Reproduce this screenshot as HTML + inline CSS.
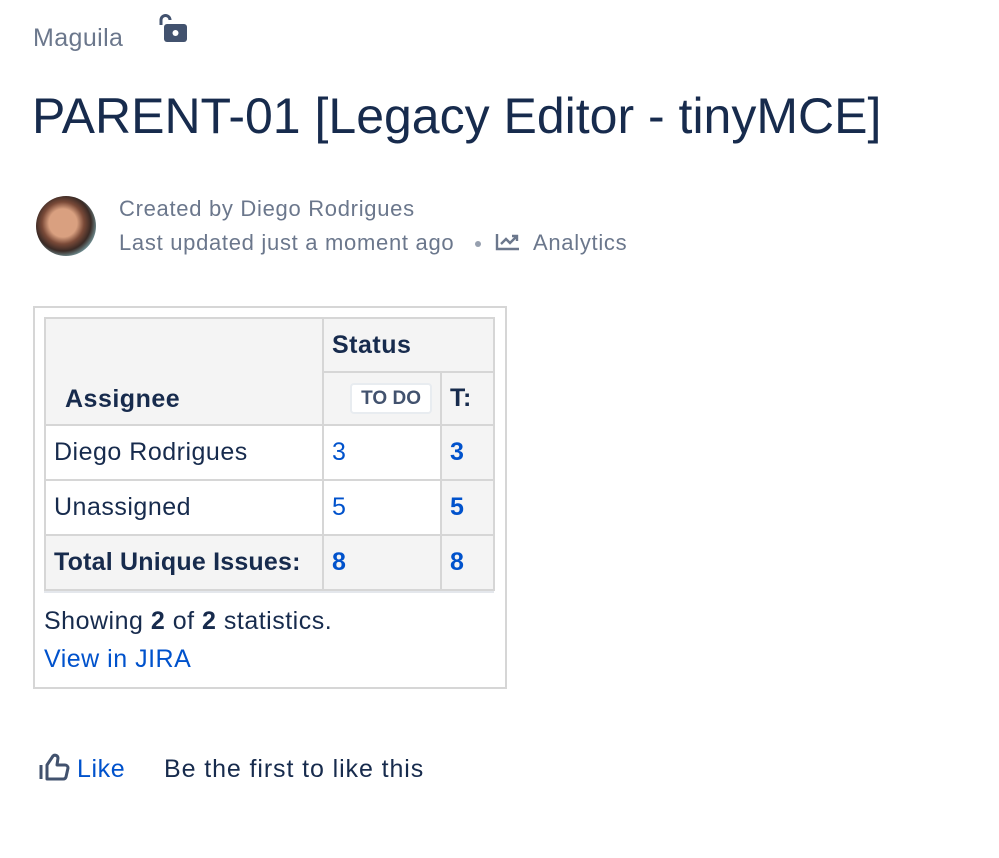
<!DOCTYPE html>
<html><head><style>
body{margin:0;width:999px;height:858px;background:#fff;font-family:"Liberation Sans",sans-serif;position:relative;overflow:hidden;color:#172B4D}
.a{position:absolute;white-space:nowrap}
table{position:absolute;left:44px;top:317px;border-collapse:collapse;font-size:25px;table-layout:fixed;width:449px;letter-spacing:0.5px}
td,th{border:2px solid #d6d6d6;padding:0 8px;text-align:left;line-height:1;overflow:visible;white-space:nowrap}
th{background:#f4f4f4;font-weight:bold}
a{color:#0052CC;text-decoration:none}
</style></head><body>
<div class="a" style="left:33px;top:24px;font-size:25px;color:#6B778C;letter-spacing:0.4px">Maguila</div>
<svg class="a" style="left:156px;top:13px" width="32" height="32" viewBox="0 0 32 32"><path d="M5 12V7a4.5 4.5 0 0 1 9 0" fill="none" stroke="#42526E" stroke-width="3"/><rect x="8" y="11" width="23" height="18" rx="3" fill="#42526E"/><circle cx="19.5" cy="20" r="3" fill="#fff"/></svg>
<div class="a" style="left:32px;top:87px;font-size:50px;color:#172B4D">PARENT-01 [Legacy Editor - tinyMCE]</div>
<div class="a" style="left:36px;top:196px;width:60px;height:60px;border-radius:50%;background:radial-gradient(circle at 45% 45%,#d9a080 0 30%,#7a4a38 45%,#3a2a25 60%,#8ac0c8 80%)"></div>
<div class="a" style="left:119px;top:196px;font-size:22px;color:#6B778C;letter-spacing:0.7px">Created by Diego Rodrigues</div>
<div class="a" style="left:119px;top:230px;font-size:22px;color:#6B778C;letter-spacing:0.7px">Last updated just a moment ago</div>
<div class="a" style="left:475px;top:241px;width:6px;height:6px;border-radius:50%;background:#97a0af"></div>
<svg class="a" style="left:495px;top:232px" width="26" height="20" viewBox="0 0 26 20"><path d="M2 2v15h22M6 12l5-5 4 4 7-7M17 4h5v5" fill="none" stroke="#6B778C" stroke-width="2.4"/></svg>
<div class="a" style="left:533px;top:230px;font-size:22px;color:#6B778C;letter-spacing:0.7px">Analytics</div>
<div class="a" style="left:33px;top:306px;width:470px;height:379px;border:2px solid #d6d6d6"></div>
<table>
<colgroup><col style="width:278px"><col style="width:118px"><col style="width:53px"></colgroup>
<tr><th rowspan="2" style="vertical-align:bottom;padding:0 0 12px 19px;height:93px">Assignee</th><th colspan="2" style="height:47px">Status</th></tr>
<tr><th style="height:46px;text-align:right;padding-right:8px;letter-spacing:0"><span style="display:inline-block;border:2px solid #e8ecf0;border-radius:4px;background:#fff;color:#42526E;font-size:19px;padding:4px 9px">TO DO</span></th><th>T:</th></tr>
<tr><td style="height:53px">Diego Rodrigues</td><td><a>3</a></td><td style="background:#f4f4f4;font-weight:bold"><a>3</a></td></tr>
<tr><td style="height:53px">Unassigned</td><td><a>5</a></td><td style="background:#f4f4f4;font-weight:bold"><a>5</a></td></tr>
<tr style="background:#f4f4f4;font-weight:bold"><td style="height:53px;letter-spacing:0.2px">Total Unique Issues:</td><td><a>8</a></td><td><a>8</a></td></tr>
</table>
<div class="a" style="left:44px;top:591px;width:450px;height:2px;background:#e4e7ec"></div>
<div class="a" style="left:44px;top:607px;font-size:25px;letter-spacing:0.5px">Showing <b>2</b> of <b>2</b> statistics.</div>
<div class="a" style="left:44px;top:645px;font-size:25px;color:#0052CC;letter-spacing:0.5px">View in JIRA</div>
<svg class="a" style="left:38px;top:752px" width="32" height="30" viewBox="0 0 32 30"><path d="M3 13v14M9 13l6-9a3 3 0 0 1 5 2l-1 7h8a3 3 0 0 1 3 3l-2 9a3 3 0 0 1-3 2H9z" fill="none" stroke="#42526E" stroke-width="3" stroke-linejoin="round"/></svg>
<div class="a" style="left:77px;top:755px;font-size:25px;color:#0052CC;letter-spacing:0.6px">Like</div>
<div class="a" style="left:164px;top:755px;font-size:25px;letter-spacing:0.9px">Be the first to like this</div>
</body></html>
